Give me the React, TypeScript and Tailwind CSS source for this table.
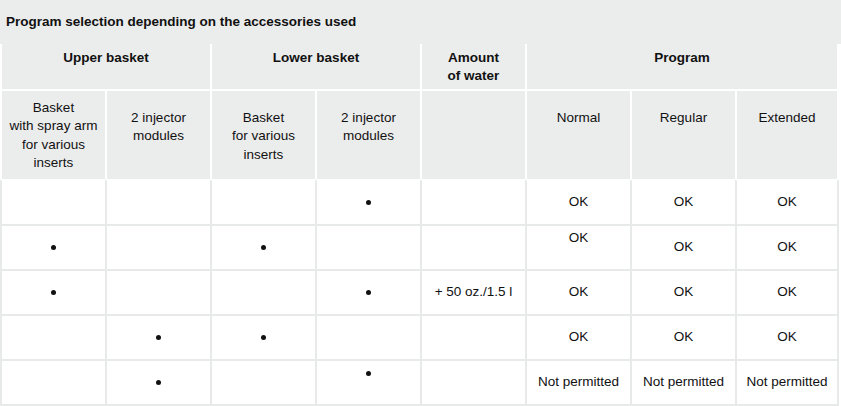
import React from 'react';

type Cell = { text?: string; raised?: boolean };

const rows: Cell[][] = [
  [{}, {}, {}, { text: '•' }, {}, { text: 'OK' }, { text: 'OK' }, { text: 'OK' }],
  [{ text: '•' }, {}, { text: '•' }, {}, {}, { text: 'OK', raised: true }, { text: 'OK' }, { text: 'OK' }],
  [{ text: '•' }, {}, {}, { text: '•' }, { text: '+ 50 oz./1.5 l' }, { text: 'OK' }, { text: 'OK' }, { text: 'OK' }],
  [{}, { text: '•' }, { text: '•' }, {}, {}, { text: 'OK' }, { text: 'OK' }, { text: 'OK' }],
  [{}, { text: '•' }, {}, { text: '•', raised: true }, {}, { text: 'Not permitted' }, { text: 'Not permitted' }, { text: 'Not permitted' }],
];

const subHeads: { lines: string[]; top: boolean }[] = [
  { lines: ['Basket', 'with spray arm', 'for various', 'inserts'], top: true },
  { lines: ['2 injector', 'modules'], top: false },
  { lines: ['Basket', 'for various', 'inserts'], top: false },
  { lines: ['2 injector', 'modules'], top: false },
  { lines: [], top: false },
  { lines: ['Normal'], top: false },
  { lines: ['Regular'], top: false },
  { lines: ['Extended'], top: false },
];

export default function App() {
  return (
    <div
      className="w-[841px] h-[406px] bg-white text-[13.5px] text-[#111] overflow-hidden"
      style={{ fontFamily: '"Liberation Sans", Arial, sans-serif' }}
    >
      <div className="h-[44px] bg-[#ebecec] flex items-center pl-[6px] font-bold">
        Program selection depending on the accessories used
      </div>

      <div className="grid grid-cols-[repeat(7,105px)_104px]">
        {/* top header row */}
        <div className="col-span-2 h-[45px] bg-[#ebecec] border-l-2 border-white flex justify-center pt-[5px] leading-[18px] font-bold">
          Upper basket
        </div>
        <div className="col-span-2 h-[45px] bg-[#ebecec] border-l-2 border-white flex justify-center pt-[5px] leading-[18px] font-bold">
          Lower basket
        </div>
        <div className="h-[45px] bg-[#ebecec] border-l-2 border-white flex flex-col items-center pt-[5px] leading-[18px] font-bold">
          <span>Amount</span>
          <span>of water</span>
        </div>
        <div className="col-span-3 h-[45px] bg-[#ebecec] border-l-2 border-r-2 border-white flex justify-center pt-[5px] leading-[18px] font-bold">
          Program
        </div>

        {/* sub header row */}
        {subHeads.map((h, i) => (
          <div
            key={i}
            className={
              'h-[90px] bg-[#ebecec] border-t-2 border-l-2 border-white flex flex-col items-center text-center leading-[18.3px] ' +
              (h.top ? 'pt-[8px] ' : 'pt-[18px] ') +
              (i === 7 ? 'border-r-2' : '')
            }
          >
            {h.lines.map((l) => (
              <span key={l}>{l}</span>
            ))}
          </div>
        ))}

        {/* body rows */}
        {rows.map((row, r) =>
          row.map((c, i) => (
            <div
              key={`${r}-${i}`}
              className={
                'h-[45px] border-t-2 border-l-2 flex items-center justify-center ' +
                (r === 0 ? 'border-t-white border-l-[#e8e9e9] ' : 'border-[#e8e9e9] ') +
                (i === 7 ? 'border-r-2 border-r-[#e8e9e9] ' : '') +
                (r === rows.length - 1 ? 'h-[47px] border-b-2 border-b-[#e8e9e9]' : '')
              }
            >
              {c.text === '•' ? (
                <span className={'block w-[5px] h-[5px] rounded-full bg-[#111] ' + (c.raised ? 'mb-[18px]' : '')} />
              ) : (
                c.text && <span className={c.raised ? 'mb-[18px]' : ''}>{c.text}</span>
              )}
            </div>
          ))
        )}
      </div>
    </div>
  );
}
